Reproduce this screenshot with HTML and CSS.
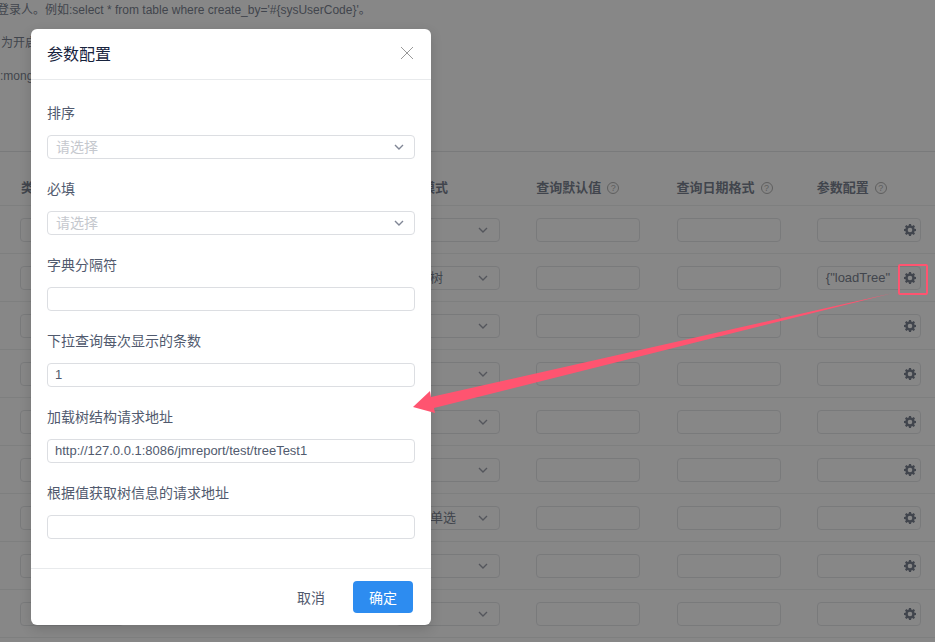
FILE: index.html
```html
<!DOCTYPE html>
<html lang="zh-CN">
<head>
<meta charset="utf-8">
<title>参数配置</title>
<link rel="stylesheet" href="styles.css">
</head>
<body>
<svg class="sprite" width="0" height="0" aria-hidden="true">
  <symbol id="chev" viewBox="0 0 10 6"><path d="M1 1l4 4 4-4" fill="none" stroke="currentColor" stroke-width="1.400"/></symbol>
  <symbol id="gear" viewBox="0 0 12 12"><path fill="currentColor" fill-rule="evenodd" d="M5 0h2l.3 1.600 1 .4L9.700 1.100l1.300 1.300-.9 1.400.4 1 1.500.2v2l-1.500.3-.4 1 .9 1.300-1.300 1.400-1.400-.9-1 .4L7 12H5l-.3-1.500-1-.4-1.300.9L1 9.600l.9-1.300-.4-1L0 7V5l1.500-.2.4-1L1 2.400l1.400-1.300 1.300.9 1-.4zM6 3.700a2.300 2.300 0 1 0 0 4.600 2.300 2.300 0 0 0 0-4.600z"/></symbol>
</svg>

<main class="page">
  <section class="notes">
    <p class="note note-first">登录人。例如:select * from table where create_by='#{sysUserCode}'。</p>
    <p class="note note-second">为开启</p>
    <p class="note">:mongodb</p>
  </section>

  <section class="table">
    <div class="row head">
      <div class="cell-first">类型</div>
      <div>查询模式</div>
      <div class="th">查询默认值<span class="help">?</span></div>
      <div class="th">查询日期格式<span class="help">?</span></div>
      <div class="th">参数配置<span class="help">?</span></div>
    </div>
    <div class="row"><div class="cell-first"><div class="field"></div></div><div class="field sel"><svg class="chev"><use href="#chev"/></svg></div><div class="field"></div><div class="field"></div><div class="field gearfield"><svg class="gear"><use href="#gear"/></svg></div></div>
    <div class="row"><div class="cell-first"><div class="field"></div></div><div class="field sel">下拉树<svg class="chev"><use href="#chev"/></svg></div><div class="field"></div><div class="field"></div><div class="field gearfield"><span class="val">{"loadTree"</span><svg class="gear"><use href="#gear"/></svg></div></div>
    <div class="row"><div class="cell-first"><div class="field"></div></div><div class="field sel"><svg class="chev"><use href="#chev"/></svg></div><div class="field"></div><div class="field"></div><div class="field gearfield"><svg class="gear"><use href="#gear"/></svg></div></div>
    <div class="row"><div class="cell-first"><div class="field"></div></div><div class="field sel"><svg class="chev"><use href="#chev"/></svg></div><div class="field"></div><div class="field"></div><div class="field gearfield"><svg class="gear"><use href="#gear"/></svg></div></div>
    <div class="row"><div class="cell-first"><div class="field"></div></div><div class="field sel"><svg class="chev"><use href="#chev"/></svg></div><div class="field"></div><div class="field"></div><div class="field gearfield"><svg class="gear"><use href="#gear"/></svg></div></div>
    <div class="row"><div class="cell-first"><div class="field"></div></div><div class="field sel"><svg class="chev"><use href="#chev"/></svg></div><div class="field"></div><div class="field"></div><div class="field gearfield"><svg class="gear"><use href="#gear"/></svg></div></div>
    <div class="row"><div class="cell-first"><div class="field"></div></div><div class="field sel">下拉单选<svg class="chev"><use href="#chev"/></svg></div><div class="field"></div><div class="field"></div><div class="field gearfield"><svg class="gear"><use href="#gear"/></svg></div></div>
    <div class="row"><div class="cell-first"><div class="field"></div></div><div class="field sel"><svg class="chev"><use href="#chev"/></svg></div><div class="field"></div><div class="field"></div><div class="field gearfield"><svg class="gear"><use href="#gear"/></svg></div></div>
    <div class="row"><div class="cell-first"><div class="field"></div></div><div class="field sel"><svg class="chev"><use href="#chev"/></svg></div><div class="field"></div><div class="field"></div><div class="field gearfield"><svg class="gear"><use href="#gear"/></svg></div></div>
  </section>
</main>

<div class="mask"></div>

<div class="modal">
  <header class="modal-head">
    <h2 class="modal-title">参数配置</h2>
    <svg class="close" viewBox="0 0 14 14"><path d="M1 1l12 12M13 1L1 13" fill="none" stroke="currentColor" stroke-width="1"/></svg>
  </header>
  <div class="modal-body">
    <div class="item"><label class="label">排序</label><div class="field sel m-sel placeholder">请选择<svg class="chev"><use href="#chev"/></svg></div></div>
    <div class="item"><label class="label">必填</label><div class="field sel m-sel placeholder">请选择<svg class="chev"><use href="#chev"/></svg></div></div>
    <div class="item"><label class="label">字典分隔符</label><div class="field m-input"></div></div>
    <div class="item"><label class="label">下拉查询每次显示的条数</label><div class="field m-input">1</div></div>
    <div class="item"><label class="label">加载树结构请求地址</label><div class="field m-input">http://127.0.0.1:8086/jmreport/test/treeTest1</div></div>
    <div class="item"><label class="label">根据值获取树信息的请求地址</label><div class="field m-input"></div></div>
  </div>
  <footer class="modal-foot">
    <button class="btn">取消</button>
    <button class="btn primary">确定</button>
  </footer>
</div>

<svg class="arrow" viewBox="0 0 935 642" width="935" height="642">
  <polygon points="893,293 431,397 430,391 413,407 435,413 434,408" fill="#ff5470"/>
</svg>
<div class="marker"></div>
</body>
</html>
```

FILE: styles.css
```css
* { box-sizing: border-box; }

html, body {
  margin: 0;
  height: 642px;
  overflow: hidden;
  background: #fff;
}

body {
  position: relative;
  font-family: "Liberation Sans", "Noto Sans CJK SC", sans-serif;
  color: #515a6e;
  font-size: 14px;
}

.sprite { position: absolute; }

.page { width: 935px; }

.notes {
  height: 152px;
  display: flex;
  flex-direction: column;
  gap: 13px;
  border-bottom: 1px solid #dcdee2;
}

.note {
  margin: 0;
  font-size: 12px;
  line-height: 20px;
  white-space: nowrap;
  color: #515a6e;
}

.note-first { margin-left: -3px; }
.note-second { margin-left: 1px; }

.row {
  height: 48px;
  display: grid;
  grid-template-columns: 339.8px repeat(4, 104px);
  column-gap: 36.25px;
  align-items: center;
  padding-left: 20px;
  border-bottom: 1px solid #e8eaec;
  font-size: 13px;
}

.row.head {
  height: 54px;
  padding-top: 16px;
  font-weight: 700;
}

.cell-first { width: 104px; padding-left: 1px; }

.row .cell-first .field { margin-left: -1px; }

.th {
  display: flex;
  align-items: center;
}

.help {
  width: 12px;
  height: 12px;
  margin-left: 6px;
  border: 1px solid #999;
  border-radius: 50%;
  color: #999;
  font-size: 9px;
  font-weight: 400;
  line-height: 10px;
  text-align: center;
  position: relative;
  top: 1px;
}

.field {
  height: 24px;
  border: 1px solid #dcdee2;
  border-radius: 4px;
  background: #fff;
  display: flex;
  align-items: center;
  font-size: 13px;
  line-height: 22px;
  color: #515a6e;
  padding-left: 7px;
}

.sel {
  padding-right: 11px;
}

.chev {
  width: 10px;
  height: 6px;
  margin-left: auto;
  color: #808695;
  flex: none;
}

.gearfield {
  justify-content: flex-end;
  padding-right: 4px;
  position: relative;
}

.val { position: absolute; left: 8px; }

.gear { width: 12px; height: 12px; color: #515a6e; flex: none; }

.mask {
  position: absolute;
  inset: 0;
  background: rgba(55, 55, 55, .6);
}

.modal {
  position: absolute;
  left: 31px;
  top: 29px;
  width: 400px;
  height: 596px;
  background: #fff;
  border-radius: 6px;
  box-shadow: 0 4px 12px rgba(0, 0, 0, .15);
  display: flex;
  flex-direction: column;
}

.modal-head {
  height: 51px;
  padding: 0 17px 2px 16px;
  border-bottom: 1px solid #e8eaec;
  display: flex;
  align-items: center;
  justify-content: space-between;
}

.modal-title {
  margin: 0;
  font-size: 16px;
  font-weight: 400;
  color: #17233d;
}

.close { width: 14px; height: 14px; color: #999; }

.modal-body {
  flex: 1;
  padding: 23px 16px 0;
  display: flex;
  flex-direction: column;
  gap: 20px;
}

.item {
  display: flex;
  flex-direction: column;
  gap: 12px;
}

.label { line-height: 20px; font-size: 14px; color: #515a6e; }

.m-sel { font-size: 14px; padding-left: 8px; padding-right: 10px; }

.placeholder { color: #c5c8ce; }

.m-input { padding-left: 7px; color: #515a6e; }

.modal-foot {
  height: 57px;
  padding: 12px 18px;
  border-top: 1px solid #e8eaec;
  display: flex;
  justify-content: flex-end;
  gap: 12px;
}

.btn {
  width: 60px;
  height: 32px;
  padding: 0;
  border: 0;
  border-radius: 4px;
  background: transparent;
  color: #515a6e;
  font: 14px "Liberation Sans", "Noto Sans CJK SC", sans-serif;
}

.btn.primary { background: #2d8cf0; color: #fff; }

.arrow { position: absolute; left: 0; top: 0; }

.marker {
  position: absolute;
  left: 898px;
  top: 264px;
  width: 30px;
  height: 31px;
  border: 2px solid #ff5470;
  border-radius: 2px;
}
```
